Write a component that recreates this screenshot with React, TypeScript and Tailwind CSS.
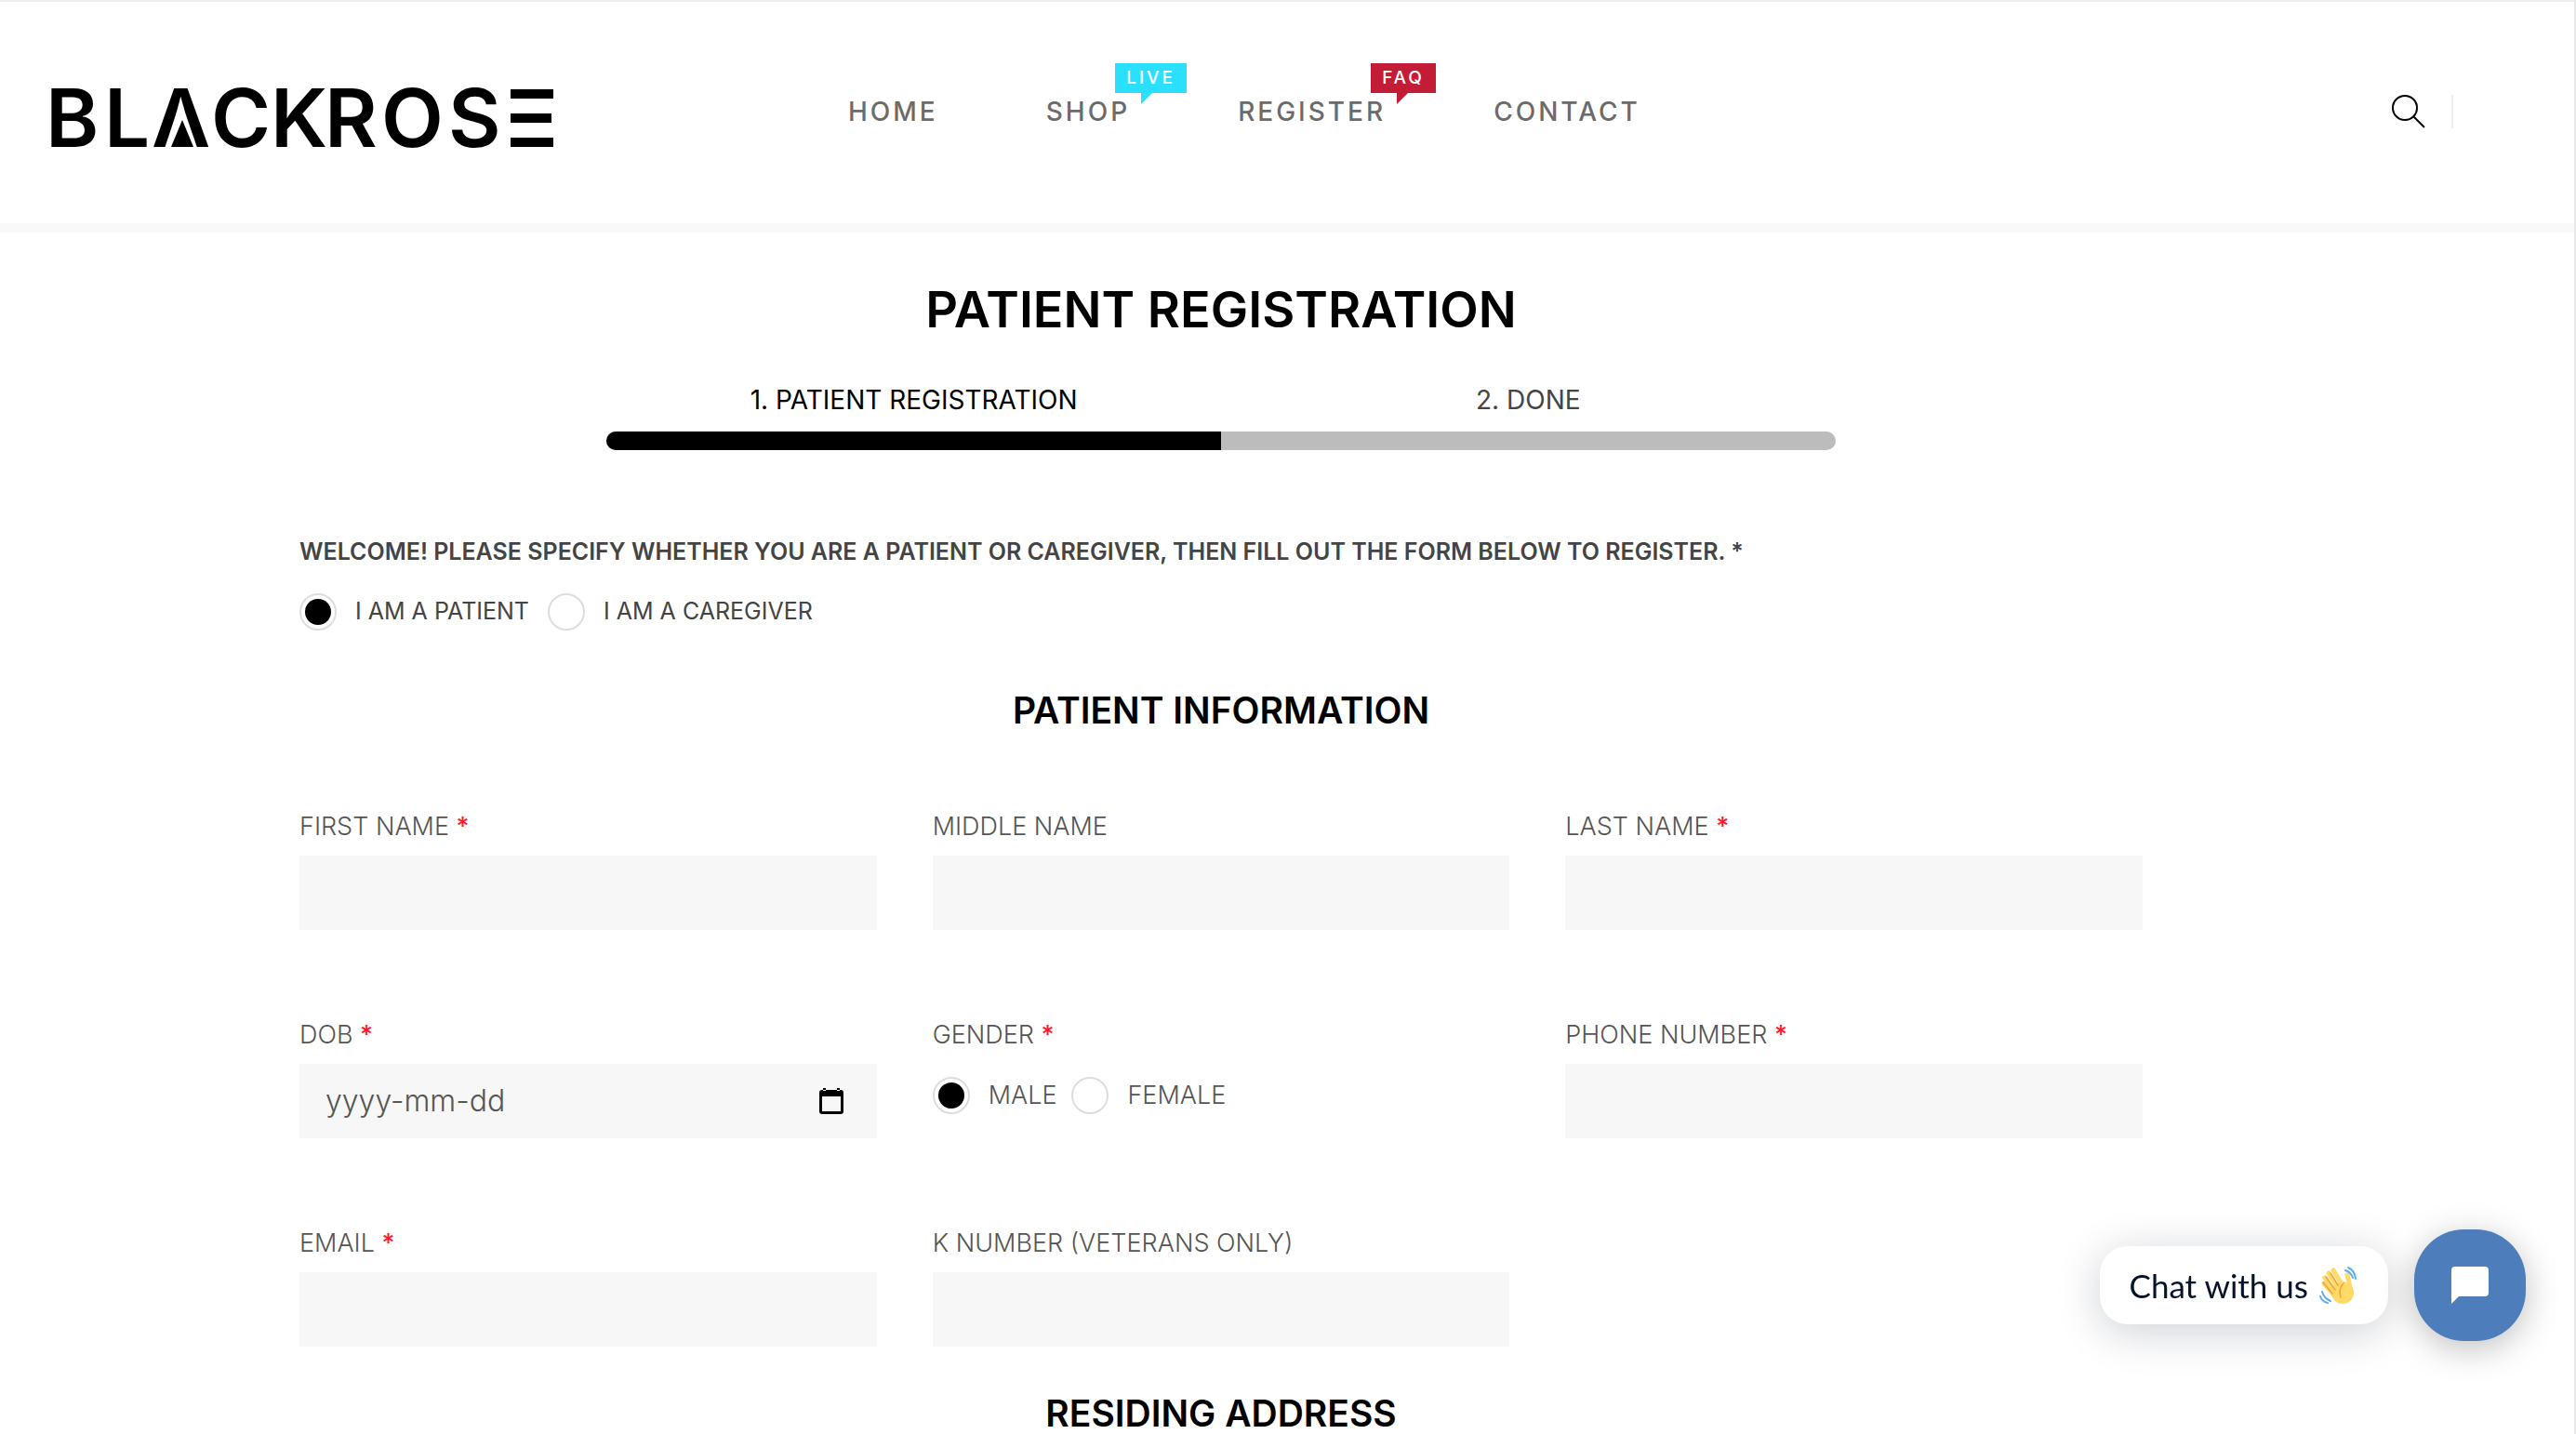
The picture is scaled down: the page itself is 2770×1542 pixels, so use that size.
import { useState } from "react";

const menu = [
  { label: "HOME" },
  { label: "SHOP", badge: "LIVE", color: "bg-[#2bdfff]", tail: "fill-[#2bdfff]" },
  { label: "REGISTER", badge: "FAQ", color: "bg-[#c31c36]", tail: "fill-[#c31c36]" },
  { label: "CONTACT" },
];

const Logo = () => {
  return (
    <svg
      viewBox="0 0 540 66"
      className="h-[66px] w-[540px] overflow-visible font-['Inter',sans-serif] text-[87px] font-semibold"
      role="img"
      aria-label="Blackrose"
    >
      <text y="64" x="-6 57">BL</text>
      <text y="64" x="108">Λ</text>
      <path d="M141 35l12 29h-24z" />
      <text y="64" x="172 236 294 355 427">CKROS</text>
      <path d="M494 2h46v10h-46zM494 28h44v10h-44zM494 54h46v10h-46z" />
    </svg>
  );
};

const Wave = () => {
  return (
    <svg viewBox="0 0 40 40" className="size-10 overflow-visible fill-none" strokeLinecap="round">
      <circle cx="25" cy="28" r="12" fill="#ffdb66" />
      <path
        d="M15 4l11 18M10 7l12 19M6 12l13 18M5 18l13 15M30 9l4 17"
        stroke="#ffdb66"
        strokeWidth="5"
      />
      <path d="M12 7l8 13M7 11l10 14M4 17l10 12M26 18q-6 6-3 15" stroke="#f0a04b" strokeWidth="1.5" />
      <path
        d="M31 1q7 3 8 12M28 4q6 2 8 8M1 32q2 6 8 7M3 27q2 7 9 10"
        stroke="#5dadec"
        strokeWidth="2"
      />
    </svg>
  );
};

const Header = () => {
  return (
    <header className="flex h-[250px] items-start border-t-2 border-b-10 border-t-[#ededed] border-b-[#f9f9f9] pl-[55px]">
      <a href="#" className="mt-[92px]">
        <Logo />
      </a>
      <nav className="mt-[98px] ml-[317px] flex gap-[116px]">
        {menu.map((item) => (
          <a
            key={item.label}
            href="#"
            className="relative text-[28px] leading-[40px] font-medium tracking-[3px] text-[#6b6b6b]"
          >
            {item.label}
            {item.badge && (
              <span
                className={`absolute -top-8 left-full -ml-4 h-8 px-3 text-[19px] leading-[32px] font-medium tracking-[3px] text-white ${item.color}`}
              >
                {item.badge}
                <svg viewBox="0 0 12 12" className={`absolute top-full left-7 size-3 ${item.tail}`}>
                  <path d="M0 0h12L0 12z" />
                </svg>
              </span>
            )}
          </a>
        ))}
      </nav>
      <div className="mt-[100px] mr-[130px] ml-auto flex items-center gap-7">
        <button aria-label="Search">
          <svg viewBox="0 0 36 36" className="size-9 fill-none stroke-black stroke-[2]">
            <circle cx="14" cy="14" r="13" />
            <path d="M23 23l12 12" />
          </svg>
        </button>
        <span className="h-9 w-[2px] bg-[#ededed]" />
      </div>
    </header>
  );
};

type RadioProps = {
  name: string;
  label: string;
  size: string;
  checked: boolean;
  onChange: () => void;
};

const Radio = ({ name, label, size, checked, onChange }: RadioProps) => {
  return (
    <label className={`flex items-center gap-5 ${size}`}>
      <input
        type="radio"
        name={name}
        checked={checked}
        onChange={onChange}
        className="size-10 appearance-none rounded-full border-2 border-[#dddddd] bg-white bg-clip-content p-1 checked:bg-black"
      />
      {label}
    </label>
  );
};

const labelStyle = "block text-[27px] leading-[42px] font-light text-[#555555]";

const Star = () => <span className="font-medium text-[#ff1b2d]">*</span>;

const Field = ({ id, text, required }: { id: string; text: string; required?: boolean }) => {
  return (
    <div>
      <label htmlFor={id} className={labelStyle}>
        {text} {required && <Star />}
      </label>
      <input id={id} className="mt-[10px] h-20 w-full bg-[#f7f7f7] px-7 text-[27px] outline-none" />
    </div>
  );
};

const DateField = () => {
  return (
    <div>
      <label htmlFor="dob" className={labelStyle}>
        DOB <Star />
      </label>
      <div className="mt-[10px] flex h-20 items-center bg-[#f7f7f7] pr-9 pl-7">
        <input
          id="dob"
          placeholder="yyyy-mm-dd"
          className="min-w-0 flex-1 text-[32px] font-light outline-none placeholder:text-[#555555]"
        />
        <button type="button" aria-label="Pick a date">
          <svg viewBox="0 0 26 28" className="h-7 w-[26px]">
            <path
              d="M3 2h20q3 0 3 3v20q0 3-3 3H3q-3 0-3-3V5q0-3 3-3zM3 9v16h20V9zM4 0h3v3H4zM19 0h3v3h-3z"
              fillRule="evenodd"
            />
          </svg>
        </button>
      </div>
    </div>
  );
};

const Chat = () => {
  return (
    <div className="fixed right-[54px] bottom-[100px] flex items-center gap-7">
      <button className="flex h-21 items-center gap-3 rounded-[30px] bg-white pr-[34px] pl-8 font-['Lato',sans-serif] text-[35px] text-[#06132b] shadow-[0_8px_48px_rgba(6,19,43,0.2)]">
        Chat with us
        <Wave />
      </button>
      <button
        aria-label="Open chat"
        className="flex size-30 items-center justify-center rounded-[54px] bg-[#4e7dbb] shadow-[0_8px_36px_rgba(0,0,0,0.25)]"
      >
        <svg viewBox="0 0 40 40" className="size-10 fill-white">
          <path d="M4 0h32q4 0 4 4v24q0 4-4 4H8l-8 8V4q0-4 4-4z" />
        </svg>
      </button>
    </div>
  );
};

export default function App() {
  const [role, setRole] = useState("patient");
  const [gender, setGender] = useState("male");

  return (
    <div className="h-screen overflow-hidden border-r-2 border-[#e8e8e8] bg-white font-['Inter',sans-serif]">
      <Header />
      <main className="pt-[47px] pr-[464px] pl-[322px]">
        <h1 className="text-center text-[54px] leading-[72px] font-semibold text-black">
          PATIENT REGISTRATION
        </h1>
        <div className="mx-auto mt-[41px] w-2/3">
          <ol className="grid grid-cols-2 text-center text-[28px] leading-[40px]">
            <li className="text-black">1. PATIENT REGISTRATION</li>
            <li className="text-[#444444]">2. DONE</li>
          </ol>
          <div className="mt-[14px] h-5 overflow-hidden rounded-full bg-[#bcbcbc]">
            <div className="h-full w-1/2 bg-black" />
          </div>
        </div>
        <form>
          <fieldset className="mt-[89px] text-[#444444]">
            <legend className="text-[25px] leading-[40px] font-semibold">
              WELCOME! PLEASE SPECIFY WHETHER YOU ARE A PATIENT OR CAREGIVER, THEN FILL OUT THE FORM
              BELOW TO REGISTER. *
            </legend>
            <div className="mt-[25px] flex gap-5">
              <Radio
                name="role"
                label="I AM A PATIENT"
                size="text-[25px]"
                checked={role === "patient"}
                onChange={() => setRole("patient")}
              />
              <Radio
                name="role"
                label="I AM A CAREGIVER"
                size="text-[25px]"
                checked={role === "caregiver"}
                onChange={() => setRole("caregiver")}
              />
            </div>
          </fieldset>
          <h2 className="mt-[62px] text-center text-[39px] leading-[48px] font-semibold text-black">
            PATIENT INFORMATION
          </h2>
          <div className="mt-[80px] grid grid-cols-3 gap-x-[60px] gap-y-[92px]">
            <Field id="first" text="FIRST NAME" required />
            <Field id="middle" text="MIDDLE NAME" />
            <Field id="last" text="LAST NAME" required />
            <DateField />
            <fieldset>
              <legend className={labelStyle}>
                GENDER <Star />
              </legend>
              <div className="mt-6 flex gap-4 font-light text-[#555555]">
                <Radio
                  name="gender"
                  label="MALE"
                  size="text-[27px]"
                  checked={gender === "male"}
                  onChange={() => setGender("male")}
                />
                <Radio
                  name="gender"
                  label="FEMALE"
                  size="text-[27px]"
                  checked={gender === "female"}
                  onChange={() => setGender("female")}
                />
              </div>
            </fieldset>
            <Field id="phone" text="PHONE NUMBER" required />
            <Field id="email" text="EMAIL" required />
            <Field id="knumber" text="K NUMBER (VETERANS ONLY)" />
          </div>
          <h2 className="mt-[48px] text-center text-[39px] leading-[48px] font-semibold text-black">
            RESIDING ADDRESS
          </h2>
        </form>
      </main>
      <Chat />
    </div>
  );
}
